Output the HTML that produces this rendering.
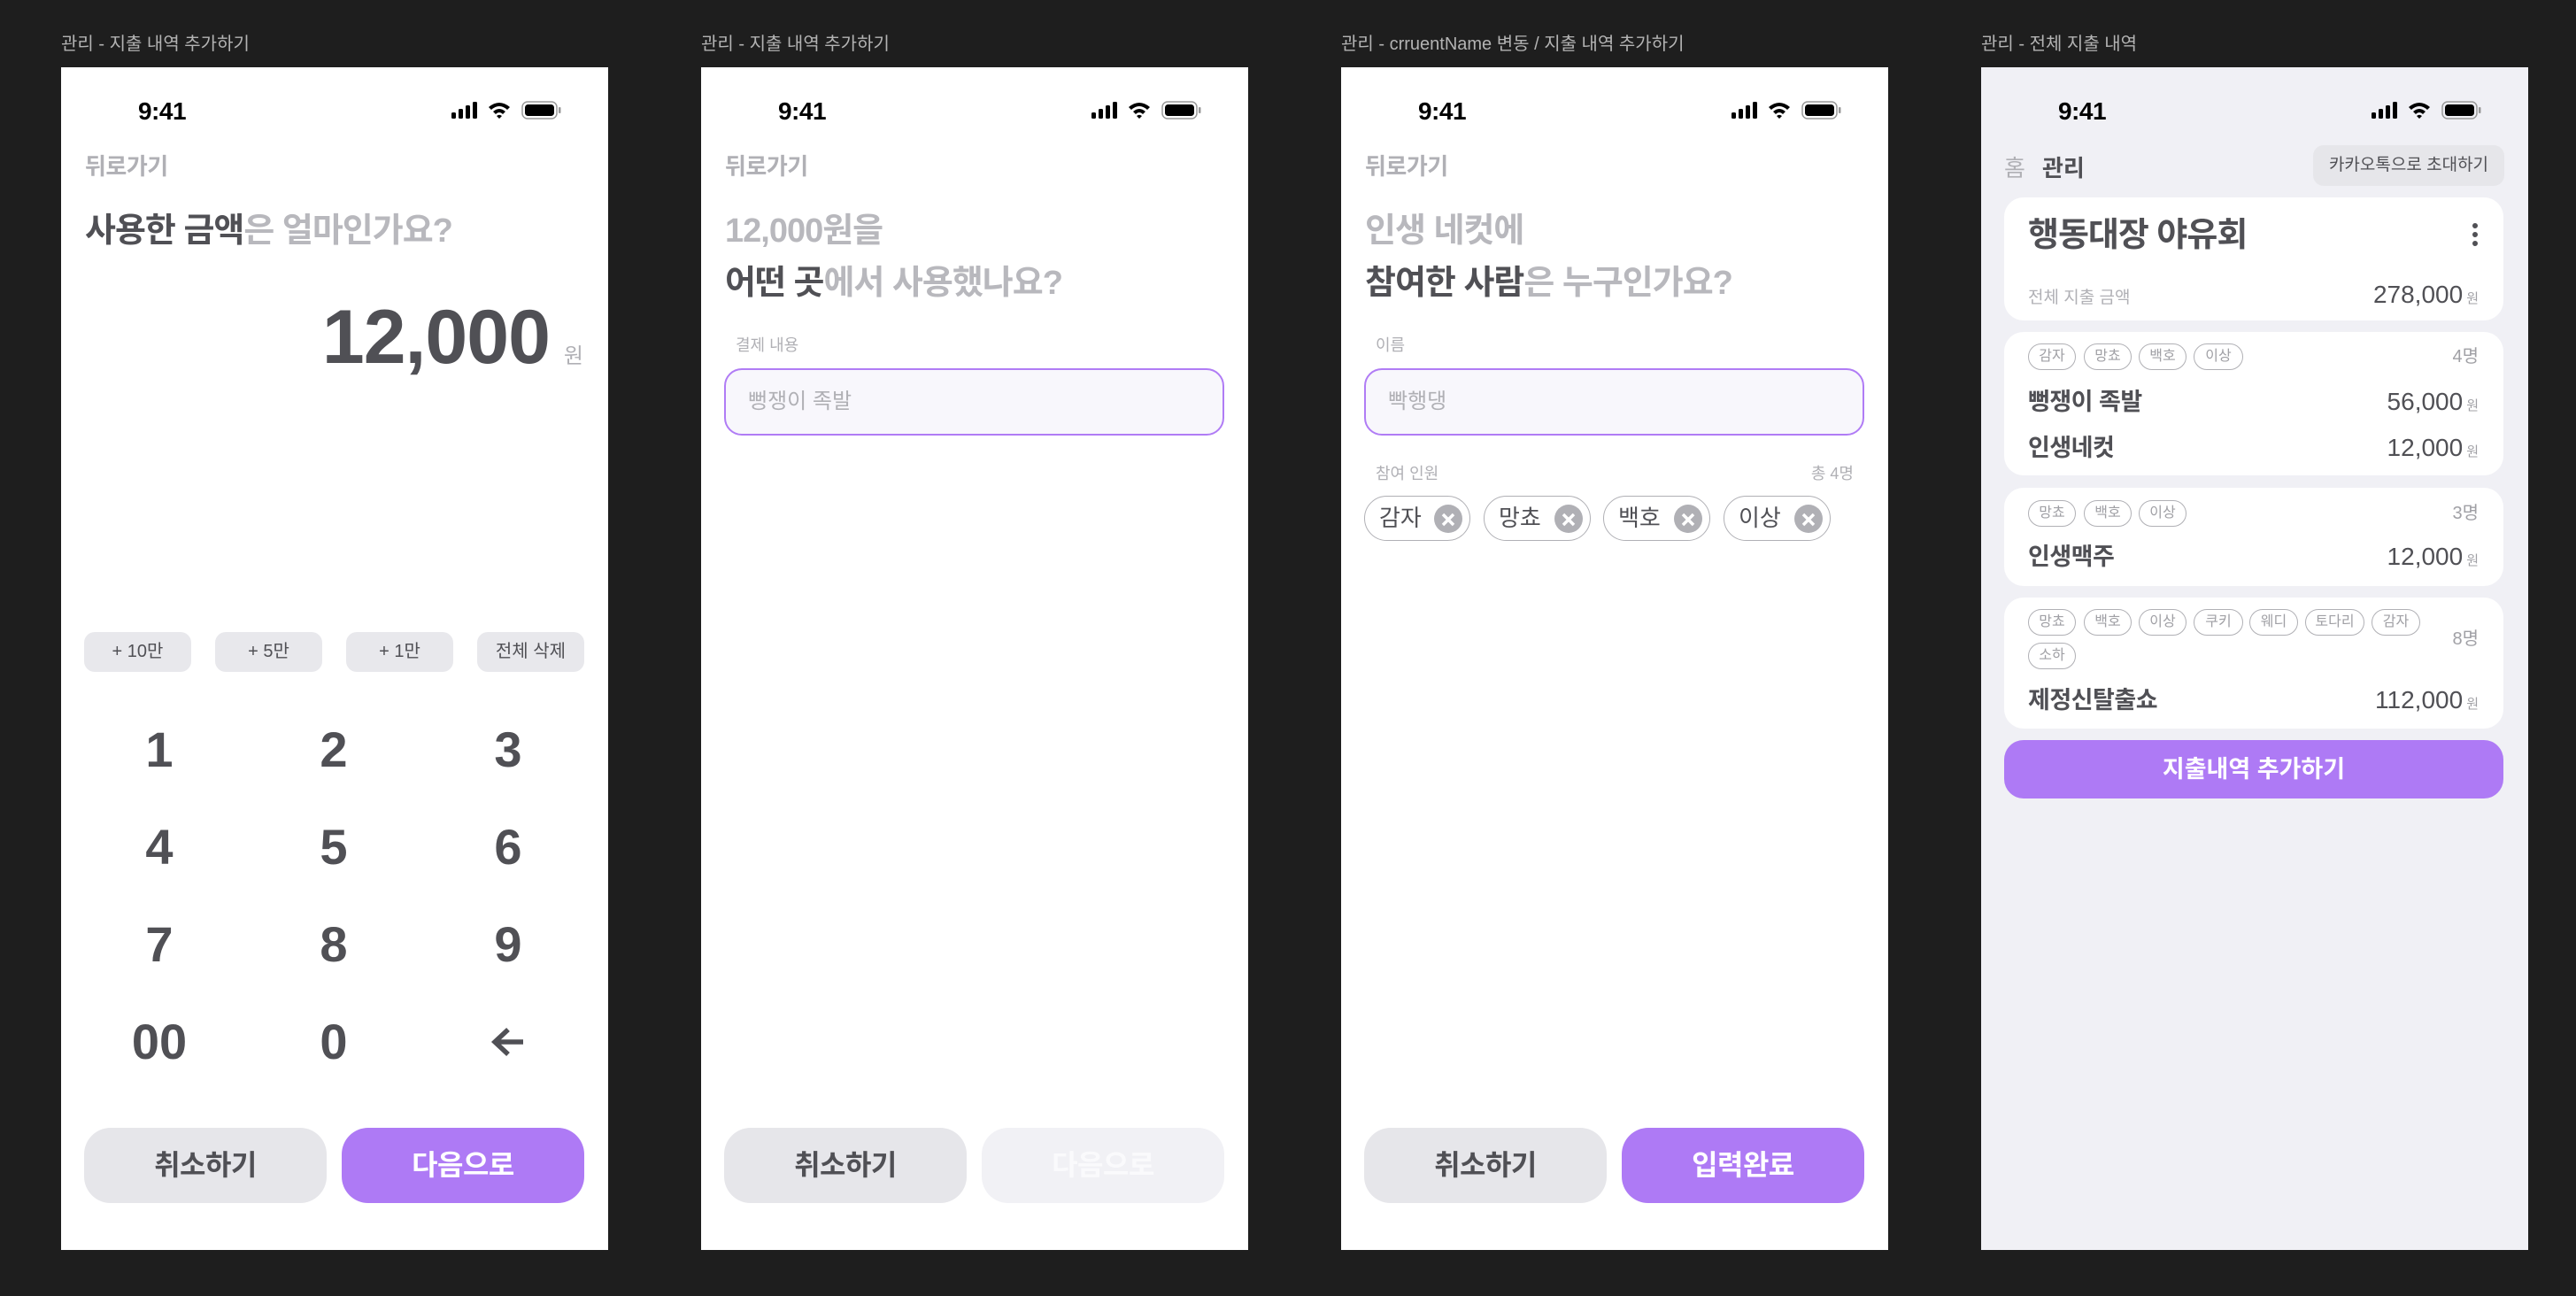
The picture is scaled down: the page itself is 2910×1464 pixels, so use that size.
<!DOCTYPE html>
<html><head><meta charset="utf-8">
<style>
*{box-sizing:border-box;margin:0;padding:0}
body{width:2910px;height:1464px;background:#1e1e1e;position:relative;overflow:hidden;font-family:"Liberation Sans","Noto Sans CJK KR",sans-serif;color:#505055}
.ttl{position:absolute;top:33px;font-size:20px;color:#b3b3b3;white-space:nowrap}
.fr{position:absolute;top:76px;width:618px;height:1336px;background:#fff;overflow:hidden}
.ab{position:absolute;white-space:nowrap}
.time{left:74px;top:34px;width:80px;text-align:center;font-size:28px;font-weight:bold;color:#000;letter-spacing:-0.5px}
.icons{left:441px;top:37px}
.back{left:27px;top:92px;font-size:26px;font-weight:bold;color:#b0b0b5;letter-spacing:-0.5px}
.h{left:27px;font-size:38px;font-weight:bold;line-height:59px;letter-spacing:-1px}
.d{color:#505055}.l{color:#b8b8bd}
.qb{top:638px;width:121px;height:45px;background:#e8e8ec;border-radius:12px;font-size:20px;line-height:45px;text-align:center;color:#505055}
.k{width:120px;margin-left:-60px;text-align:center;font-size:56px;font-weight:bold;line-height:60px;margin-top:-30px;color:#505055}
.bt{top:1198px;height:85px;width:274px;border-radius:30px;text-align:center;line-height:85px;font-size:32px;font-weight:bold;letter-spacing:-0.5px}
.c{background:#e6e6ea;color:#505055}
.p{background:#ae7af5;color:#fff}
.lab{left:39px;font-size:18px;color:#b0b0b5}
.inp{left:26px;top:340px;width:565px;height:76px;border:2px solid #b07cf5;background:#f8f7fc;border-radius:20px;font-size:24px;color:#b0b0b5;padding-left:25px;line-height:72px}
.chip{top:484px;height:51px;border:1.5px solid #b0b0b5;border-radius:26px;font-size:26px;line-height:48px;padding-left:16px}
.chip .x{position:absolute;right:8px;top:9px;width:32px;height:32px;border-radius:16px;background:#b0b0b5}
.card{position:absolute;left:26px;width:564px;background:#fff;border-radius:22px}
.tg{position:absolute;height:30px;border:1.5px solid #b0b0b5;border-radius:15px;font-size:16px;line-height:27px;text-align:center;color:#a0a0a5}
.cnt{position:absolute;right:28px;font-size:20px;color:#a0a0a5;line-height:24px;margin-top:-12px}
.nm{position:absolute;left:27px;font-size:27px;font-weight:bold;line-height:34px;margin-top:-17px;letter-spacing:-0.5px}
.amt{position:absolute;right:28px;font-size:28px;line-height:34px;margin-top:-17px;color:#505055}
.amt small{font-size:15px;color:#a0a0a5;margin-left:4px}
</style></head><body>

<div class="ttl" style="left:69px">관리 - 지출 내역 추가하기</div>
<div class="ttl" style="left:792px">관리 - 지출 내역 추가하기</div>
<div class="ttl" style="left:1515px">관리 - crruentName 변동 / 지출 내역 추가하기</div>
<div class="ttl" style="left:2238px">관리 - 전체 지출 내역</div>

<!-- FRAME 1 -->
<div class="fr" style="left:69px">
 <div class="ab time">9:41</div>
 <svg class="ab icons" width="130" height="24" viewBox="0 0 130 24"><rect x="0" y="14" width="5" height="7" rx="1.5" fill="#000"/><rect x="8" y="10" width="5" height="11" rx="1.5" fill="#000"/><rect x="16" y="6" width="5" height="15" rx="1.5" fill="#000"/><rect x="24" y="2" width="5" height="19" rx="1.5" fill="#000"/><path d="M42 8 Q54 -2 66 8 L63 11 Q54 3 45 11Z M47 13 Q54 7 61 13 L58 16 Q54 12 50 16Z M51 18 L54 21 L57 18 Q54 15.5 51 18Z" fill="#000"/><rect x="80" y="2" width="39" height="19" rx="6" fill="none" stroke="#999" stroke-width="1.5"/><rect x="83" y="5" width="33" height="13" rx="3.5" fill="#000"/><rect x="121" y="8" width="2.5" height="7" rx="1" fill="#999"/></svg>
 <div class="ab back">뒤로가기</div>
 <div class="ab h" style="top:156px"><span class="d">사용한 금액</span><span class="l">은 얼마인가요?</span></div>
 <div class="ab" style="right:28px;top:262px;display:flex;align-items:baseline;line-height:1">
  <span style="font-size:86px;font-weight:bold;letter-spacing:-1px;color:#505055">12,000</span>
  <span style="font-size:24px;color:#b0b0b5;margin-left:16px">원</span>
 </div>
 <div class="ab qb" style="left:26px">+ 10만</div>
 <div class="ab qb" style="left:174px">+ 5만</div>
 <div class="ab qb" style="left:322px">+ 1만</div>
 <div class="ab qb" style="left:470px">전체 삭제</div>
 <div class="ab k" style="left:111px;top:771px">1</div>
 <div class="ab k" style="left:308px;top:771px">2</div>
 <div class="ab k" style="left:505px;top:771px">3</div>
 <div class="ab k" style="left:111px;top:881px">4</div>
 <div class="ab k" style="left:308px;top:881px">5</div>
 <div class="ab k" style="left:505px;top:881px">6</div>
 <div class="ab k" style="left:111px;top:991px">7</div>
 <div class="ab k" style="left:308px;top:991px">8</div>
 <div class="ab k" style="left:505px;top:991px">9</div>
 <div class="ab k" style="left:111px;top:1101px">00</div>
 <div class="ab k" style="left:308px;top:1101px">0</div>
 <svg class="ab" style="left:485px;top:1083px" width="40" height="36" viewBox="0 0 40 36"><path d="M37 18 H6 M20 4 L5 18 L20 32" fill="none" stroke="#505055" stroke-width="5.5" stroke-linejoin="miter"/></svg>
 <div class="ab bt c" style="left:26px">취소하기</div>
 <div class="ab bt p" style="left:317px">다음으로</div>
</div>

<!-- FRAME 2 -->
<div class="fr" style="left:792px">
 <div class="ab time">9:41</div>
 <svg class="ab icons" width="130" height="24" viewBox="0 0 130 24"><rect x="0" y="14" width="5" height="7" rx="1.5" fill="#000"/><rect x="8" y="10" width="5" height="11" rx="1.5" fill="#000"/><rect x="16" y="6" width="5" height="15" rx="1.5" fill="#000"/><rect x="24" y="2" width="5" height="19" rx="1.5" fill="#000"/><path d="M42 8 Q54 -2 66 8 L63 11 Q54 3 45 11Z M47 13 Q54 7 61 13 L58 16 Q54 12 50 16Z M51 18 L54 21 L57 18 Q54 15.5 51 18Z" fill="#000"/><rect x="80" y="2" width="39" height="19" rx="6" fill="none" stroke="#999" stroke-width="1.5"/><rect x="83" y="5" width="33" height="13" rx="3.5" fill="#000"/><rect x="121" y="8" width="2.5" height="7" rx="1" fill="#999"/></svg>
 <div class="ab back">뒤로가기</div>
 <div class="ab h" style="top:156px"><span class="l">12,000원을</span><br><span class="d">어떤 곳</span><span class="l">에서 사용했나요?</span></div>
 <div class="ab lab" style="top:300px">결제 내용</div>
 <div class="ab inp">뻥쟁이 족발</div>
 <div class="ab bt c" style="left:26px">취소하기</div>
 <div class="ab bt" style="left:317px;background:#f1f1f5;color:#fafafc">다음으로</div>
</div>

<!-- FRAME 3 -->
<div class="fr" style="left:1515px">
 <div class="ab time">9:41</div>
 <svg class="ab icons" width="130" height="24" viewBox="0 0 130 24"><rect x="0" y="14" width="5" height="7" rx="1.5" fill="#000"/><rect x="8" y="10" width="5" height="11" rx="1.5" fill="#000"/><rect x="16" y="6" width="5" height="15" rx="1.5" fill="#000"/><rect x="24" y="2" width="5" height="19" rx="1.5" fill="#000"/><path d="M42 8 Q54 -2 66 8 L63 11 Q54 3 45 11Z M47 13 Q54 7 61 13 L58 16 Q54 12 50 16Z M51 18 L54 21 L57 18 Q54 15.5 51 18Z" fill="#000"/><rect x="80" y="2" width="39" height="19" rx="6" fill="none" stroke="#999" stroke-width="1.5"/><rect x="83" y="5" width="33" height="13" rx="3.5" fill="#000"/><rect x="121" y="8" width="2.5" height="7" rx="1" fill="#999"/></svg>
 <div class="ab back">뒤로가기</div>
 <div class="ab h" style="top:156px"><span class="l">인생 네컷에</span><br><span class="d">참여한 사람</span><span class="l">은 누구인가요?</span></div>
 <div class="ab lab" style="top:300px">이름</div>
 <div class="ab inp">빡행댕</div>
 <div class="ab lab" style="top:445px">참여 인원</div>
 <div class="ab lab" style="top:445px;left:auto;right:39px">총 4명</div>
 <div class="ab chip" style="left:26px;width:120px">감자<span class="x"><svg width="32" height="32"><path d="M10 10 L22 22 M22 10 L10 22" stroke="#fff" stroke-width="3.5"/></svg></span></div>
 <div class="ab chip" style="left:161px;width:121px">망쵸<span class="x"><svg width="32" height="32"><path d="M10 10 L22 22 M22 10 L10 22" stroke="#fff" stroke-width="3.5"/></svg></span></div>
 <div class="ab chip" style="left:296px;width:121px">백호<span class="x"><svg width="32" height="32"><path d="M10 10 L22 22 M22 10 L10 22" stroke="#fff" stroke-width="3.5"/></svg></span></div>
 <div class="ab chip" style="left:432px;width:121px">이상<span class="x"><svg width="32" height="32"><path d="M10 10 L22 22 M22 10 L10 22" stroke="#fff" stroke-width="3.5"/></svg></span></div>
 <div class="ab bt c" style="left:26px">취소하기</div>
 <div class="ab bt p" style="left:317px">입력완료</div>
</div>

<!-- FRAME 4 -->
<div class="fr" style="left:2238px;background:#f0f0f5">
 <div class="ab time">9:41</div>
 <svg class="ab icons" width="130" height="24" viewBox="0 0 130 24"><rect x="0" y="14" width="5" height="7" rx="1.5" fill="#000"/><rect x="8" y="10" width="5" height="11" rx="1.5" fill="#000"/><rect x="16" y="6" width="5" height="15" rx="1.5" fill="#000"/><rect x="24" y="2" width="5" height="19" rx="1.5" fill="#000"/><path d="M42 8 Q54 -2 66 8 L63 11 Q54 3 45 11Z M47 13 Q54 7 61 13 L58 16 Q54 12 50 16Z M51 18 L54 21 L57 18 Q54 15.5 51 18Z" fill="#000"/><rect x="80" y="2" width="39" height="19" rx="6" fill="none" stroke="#999" stroke-width="1.5"/><rect x="83" y="5" width="33" height="13" rx="3.5" fill="#000"/><rect x="121" y="8" width="2.5" height="7" rx="1" fill="#999"/></svg>
 <div class="ab" style="left:26px;top:94px;font-size:26px;color:#b0b0b5">홈</div>
 <div class="ab" style="left:69px;top:94px;font-size:26px;font-weight:bold;color:#505055">관리</div>
 <div class="ab" style="left:375px;top:88px;width:216px;height:46px;background:#e6e6ea;border-radius:12px;font-size:19px;line-height:46px;text-align:center;color:#505055">카카오톡으로 초대하기</div>

 <div class="card" style="top:147px;height:139px">
  <div class="ab" style="left:27px;top:20px;font-size:38px;font-weight:bold;line-height:46px;letter-spacing:-1px">행동대장 야유회</div>
  <svg class="ab" style="left:528px;top:28px" width="8" height="30"><circle cx="4" cy="4" r="3" fill="#505055"/><circle cx="4" cy="14" r="3" fill="#505055"/><circle cx="4" cy="24" r="3" fill="#505055"/></svg>
  <div class="ab" style="left:27px;top:98px;font-size:19px;color:#b0b0b5">전체 지출 금액</div>
  <div class="amt" style="top:110px">278,000<small>원</small></div>
 </div>

 <div class="card" style="top:299px;height:162px">
  <div class="tg" style="left:27px;top:13px;width:54px">감자</div>
  <div class="tg" style="left:90px;top:13px;width:54px">망쵸</div>
  <div class="tg" style="left:152px;top:13px;width:54px">백호</div>
  <div class="tg" style="left:214px;top:13px;width:56px">이상</div>
  <div class="cnt" style="top:28px">4명</div>
  <div class="nm" style="top:79px">뻥쟁이 족발</div>
  <div class="amt" style="top:79px">56,000<small>원</small></div>
  <div class="nm" style="top:131px">인생네컷</div>
  <div class="amt" style="top:131px">12,000<small>원</small></div>
 </div>

 <div class="card" style="top:475px;height:111px">
  <div class="tg" style="left:27px;top:14px;width:54px">망쵸</div>
  <div class="tg" style="left:90px;top:14px;width:54px">백호</div>
  <div class="tg" style="left:152px;top:14px;width:54px">이상</div>
  <div class="cnt" style="top:29px">3명</div>
  <div class="nm" style="top:78px">인생맥주</div>
  <div class="amt" style="top:78px">12,000<small>원</small></div>
 </div>

 <div class="card" style="top:599px;height:148px">
  <div class="tg" style="left:27px;top:13px;width:54px">망쵸</div>
  <div class="tg" style="left:90px;top:13px;width:54px">백호</div>
  <div class="tg" style="left:152px;top:13px;width:54px">이상</div>
  <div class="tg" style="left:214px;top:13px;width:56px">쿠키</div>
  <div class="tg" style="left:277px;top:13px;width:55px">웨디</div>
  <div class="tg" style="left:340px;top:13px;width:67px">토다리</div>
  <div class="tg" style="left:415px;top:13px;width:55px">감자</div>
  <div class="tg" style="left:27px;top:51px;width:54px">소하</div>
  <div class="cnt" style="top:47px">8명</div>
  <div class="nm" style="top:116px">제정신탈출쇼</div>
  <div class="amt" style="top:116px">112,000<small>원</small></div>
 </div>

 <div class="ab" style="left:26px;top:760px;width:564px;height:66px;background:#ae7af5;border-radius:22px;color:#fff;font-size:27px;font-weight:bold;line-height:66px;text-align:center">지출내역 추가하기</div>
</div>
</body></html>
